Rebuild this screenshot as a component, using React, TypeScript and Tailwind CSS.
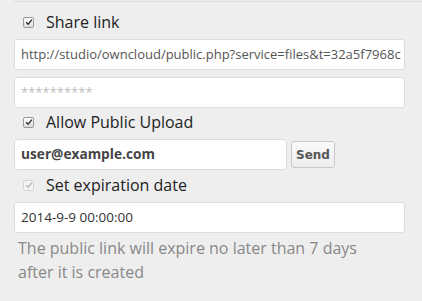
import React from 'react';

function Check({ disabled = false }: { disabled?: boolean }) {
  return (
    <span
      className={
        'flex h-[11px] w-[11px] items-center justify-center rounded-[2px] border ' +
        (disabled ? 'border-[#d4d4d4] bg-[#f4f4f4]' : 'border-[#9a9a9a] bg-gradient-to-b from-[#ffffff] to-[#dcdcdc]')
      }
    >
      <svg viewBox="0 0 10 10" className="h-[8px] w-[8px]">
        <path
          d="M1.5 5.2 L4 7.8 L8.6 2"
          fill="none"
          stroke={disabled ? '#b8b8b8' : '#333'}
          strokeWidth="1.8"
        />
      </svg>
    </span>
  );
}

export default function App() {
  return (
    <div className="h-[301px] w-[422px] overflow-hidden bg-[#eeeeee] font-['Open_Sans',sans-serif]">
      <div className="ml-[14px] mt-[1px] border-t border-[#dddddd] pr-[17px]">
        {/* Share link */}
        <label className="mb-[2px] mt-[5px] flex h-[30px] items-center">
          <span className="ml-[9px]">
            <Check />
          </span>
          <span className="ml-[12px] text-[16px] text-[#222]">Share link</span>
        </label>
        <div className="flex h-[31px] items-center overflow-hidden rounded-[3px] border border-[#dddddd] bg-white pl-[6px] text-[13px] whitespace-nowrap text-[#555]">
          http://studio/owncloud/public.php?service=files&amp;t=32a5f7968c
        </div>
        <div className="mt-[7px] flex h-[31px] items-center rounded-[3px] border border-[#dddddd] bg-white pl-[6px] text-[13px] text-[#bbbbbb]">
          **********
        </div>

        {/* Allow Public Upload */}
        <label className="mb-[3px] flex h-[28px] items-center">
          <span className="ml-[9px]">
            <Check />
          </span>
          <span className="ml-[12px] text-[16px] text-[#222]">Allow Public Upload</span>
        </label>
        <div className="flex h-[31px] items-center">
          <div className="flex h-[31px] w-[273px] items-center rounded-[3px] border border-[#dddddd] bg-white pl-[6px] text-[13.7px] font-bold text-[#444]">
            user@example.com
          </div>
          <button className="ml-[4px] h-[27px] w-[44px] rounded-[3px] border border-[#c8c8c8] bg-gradient-to-b from-[#fafafa] to-[#ededed] font-['DejaVu_Sans',sans-serif] text-[12px] font-bold text-[#555]">
            Send
          </button>
        </div>

        {/* Set expiration date */}
        <label className="mb-[2px] flex h-[30px] items-center">
          <span className="ml-[9px]">
            <Check disabled />
          </span>
          <span className="ml-[12px] text-[16px] text-[#222]">Set expiration date</span>
        </label>
        <div className="flex h-[31px] items-center rounded-[3px] border border-[#dddddd] bg-white pl-[6px] text-[13.5px] text-[#333]">
          2014-9-9 00:00:00
        </div>
        <p className="mt-[3px] pl-[4px] pr-[40px] text-[16px] leading-[24px] text-[#888]">
          The public link will expire no later than 7 days after it is created
        </p>
      </div>
    </div>
  );
}
